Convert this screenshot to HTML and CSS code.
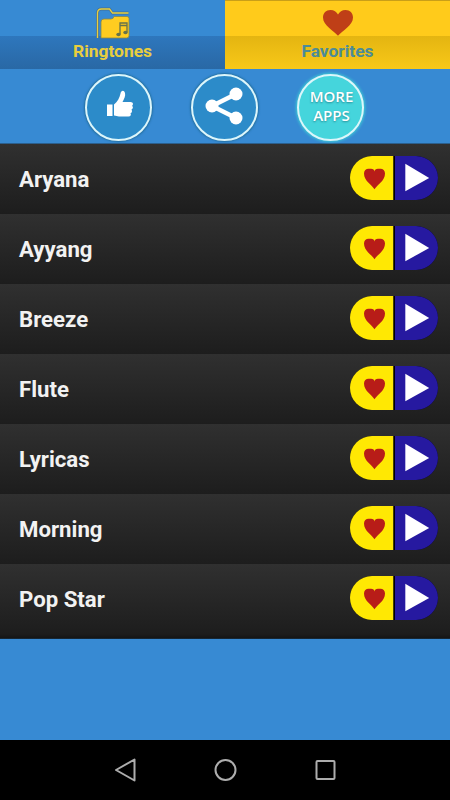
FILE: index.html
```html
<!DOCTYPE html>
<html lang="en">
<head>
<meta charset="utf-8">
<title>Ringtones</title>
<link rel="stylesheet" href="styles.css">
</head>
<body>
<svg class="defs" width="0" height="0" aria-hidden="true">
  <symbol id="toggle" viewBox="0 0 88 44">
    <path fill="#ffe803" d="M43.5 0H22a22 22 0 0 0 0 44H43.5z"/>
    <path fill="#2619a0" d="M45 0H66a22 22 0 0 1 0 44H45z"/>
    <path fill="#000" d="M43.5 0H45V44H43.5z"/>
    <path fill="#b81c18" d="M24.500 33.200C22 29 14 25 14 17.500C14 14.500 16 12.700 18.500 12.700H21C23 12.700 24.500 14 24.500 15.500C24.500 14 26 12.700 28 12.700H30.500C33 12.700 35 14.500 35 17.500C35 25 27 29 24.500 33.200z"/>
    <path fill="#fff" d="M55.3 7.7L79.2 22L55.3 35.3z"/>
  </symbol>
</svg>
<div class="screen">
  <nav class="tabs">
    <div class="tab tab-ringtones">
      <svg class="tab-icon" width="34" height="32" viewBox="0 0 34 32">
        <path fill="none" stroke="#42719a" stroke-width="2.800" d="M1.500 31V6Q1.500 2 5.500 2H13.500L16.500 6H32.500"/>
        <path fill="none" stroke="#e8cf3d" stroke-width="1.300" d="M1.500 31V6Q1.500 2 5.500 2H13.500L16.500 6H32.500"/>
        <path fill="#ffcc20" stroke="#88884d" stroke-width=".8" d="M5 31V15Q5 12 8 12H15Q17.500 12 18 9.500H31Q33 9.500 33 11.500V28.500Q33 31 30.500 31z"/>
        <path fill="none" stroke="#66724a" stroke-width="1.300" d="M24 27V16H31V25M24 18.500H31"/>
        <ellipse cx="22.500" cy="27.500" rx="2.200" ry="1.800" fill="#66724a"/>
        <ellipse cx="29.500" cy="25.500" rx="2.200" ry="1.800" fill="#66724a"/>
      </svg>
      <span class="tab-label">Ringtones</span>
    </div>
    <div class="tab tab-favorites">
      <svg class="tab-icon" width="34" height="32" viewBox="0 0 34 32">
        <path fill="#bf3f17" d="M17 28.800C13 24 2 18.500 2 10.500C2 6 5 3 9.500 3C13 3 15.500 5 17 7.500C18.500 5 21 3 24.500 3C29 3 32 6 32 10.500C32 18.500 21 24 17 28.800z"/>
      </svg>
      <span class="tab-label">Favorites</span>
    </div>
  </nav>
  <div class="actions">
    <div class="round">
      <svg width="66" height="66" viewBox="0 0 66 66">
        <path fill="#fff" d="M21 29.500H26.500V41H21zM28 40.500V29.500C31.500 27 33.500 23 34.500 18.500C35 15.500 38 14.500 39 18C39.800 21 38 24 36.500 27H44.500C47.500 27 47.500 30 46 30.800C47.500 31.800 47 34 45.500 34.500C46.500 36 46 37.800 44.500 38.200C45.500 40 44.500 41.500 42.500 41.500H33C31 41.500 30 40.500 28 40.500z"/>
      </svg>
    </div>
    <div class="round">
      <svg width="66" height="66" viewBox="0 0 66 66">
        <path fill="none" stroke="#fff" stroke-width="4.500" d="M44 19L20 31L44 43"/>
        <circle cx="20" cy="31" r="6.500" fill="#fff"/>
        <circle cx="44" cy="19" r="6.500" fill="#fff"/>
        <circle cx="44" cy="43" r="6.500" fill="#fff"/>
      </svg>
    </div>
    <div class="round round-more"><span>MORE<br>APPS</span></div>
  </div>
  <ul class="list">
    <li class="row"><span>Aryana</span><svg class="toggle"><use href="#toggle"/></svg></li>
    <li class="row"><span>Ayyang</span><svg class="toggle"><use href="#toggle"/></svg></li>
    <li class="row"><span>Breeze</span><svg class="toggle"><use href="#toggle"/></svg></li>
    <li class="row"><span>Flute</span><svg class="toggle"><use href="#toggle"/></svg></li>
    <li class="row"><span>Lyricas</span><svg class="toggle"><use href="#toggle"/></svg></li>
    <li class="row"><span>Morning</span><svg class="toggle"><use href="#toggle"/></svg></li>
    <li class="row row-last"><span>Pop Star</span><svg class="toggle"><use href="#toggle"/></svg></li>
  </ul>
  <footer class="navbar">
    <svg width="24" height="24" viewBox="0 0 24 24"><path d="M21.500 1.500V22.500L3 12z"/></svg>
    <svg width="24" height="24" viewBox="0 0 24 24"><circle cx="12.500" cy="12" r="10"/></svg>
    <svg width="24" height="24" viewBox="0 0 24 24"><rect x="3.500" y="3" width="18" height="18" rx="1"/></svg>
  </footer>
</div>
</body>
</html>
```
FILE: styles.css
```css
* { box-sizing: border-box; }
body { margin: 0; font-family: Roboto, sans-serif; }
.defs { display: block; }
.screen {
  width: 450px;
  height: 800px;
  display: flex;
  flex-direction: column;
  overflow: hidden;
  background: #378ad3;
}
.tabs { display: flex; height: 69px; }
.tab {
  width: 225px;
  display: flex;
  flex-direction: column;
  align-items: center;
  padding-top: 7px;
}
.tab-ringtones { background: linear-gradient(#378ad3 36px, #2e77bd 36px, #2968a5 69px); }
.tab-favorites {
  background: linear-gradient(#ffcb1b 35px, #e4b511 35px, #f8c818 68px);
  border-top: 1px solid #c99f18;
  padding-top: 6px;
}
.tab-icon { display: block; }
.tab-label { font-size: 17.4px; font-weight: 700; line-height: 20px; margin-top: 2px; }
.tab-ringtones .tab-label { color: #e9ce3d; }
.tab-favorites .tab-label { color: #4b8b99; }
.actions { height: 75px; display: flex; gap: 39px; padding: 5px 0 0 85px; border-bottom: 1px solid #2c5f8c; }
.round {
  width: 67px;
  height: 67px;
  border: 2px solid #dcf6fb;
  border-radius: 50%;
  background: #2c8bc9;
  box-shadow: 0 0 2px 1px #236f9f;
  display: flex;
  align-items: center;
  justify-content: center;
}
.round svg { flex: none; }
.round-more {
  background: #45d5dc;
  box-shadow: 0 0 3px 1px #3ed0d5;
  color: #fff;
  font: 600 15px/19px "Open Sans", sans-serif;
  text-align: center;
  text-shadow: 0 1px 2px #278e96;
  padding: 0 0 4px 2px;
}
.list { list-style: none; margin: 0; padding: 0; }
.row {
  height: 70px;
  display: flex;
  justify-content: space-between;
  align-items: flex-start;
  padding: 12px 12px 0 19px;
  background: linear-gradient(#303030, #1d1d1d);
  color: #f2f2f2;
  font-size: 22.2px;
  font-weight: 700;
  line-height: 47px;
}
.row-last {
  height: 75px;
  background: linear-gradient(#303030, #1d1d1d 70px, #151515 74px, #163854 75px);
}
.toggle { width: 88px; height: 44px; filter: drop-shadow(0 0 .5px #000); }
.navbar {
  margin-top: auto;
  height: 60px;
  background: #000;
  display: flex;
  justify-content: center;
  gap: 76px;
  padding-top: 18px;
}
.navbar svg { fill: none; stroke: #adadad; stroke-width: 2; stroke-linejoin: round; }
```
